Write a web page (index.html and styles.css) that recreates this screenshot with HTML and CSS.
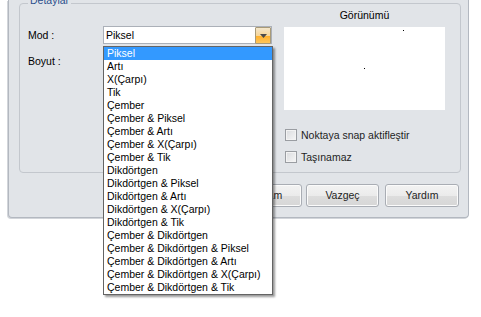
FILE: index.html
```html
<!DOCTYPE html>
<html lang="tr">
<head>
	<meta charset="UTF-8">
	<title>Detaylar</title>
	<link rel="stylesheet" href="styles.css">
</head>
<body>
	<div class="dialog">
		<div class="group">
			<span class="legend">Detaylar</span>
			<div class="form">
				<div class="row">
					<span class="label">Mod :</span>
					<div class="combo">
						<span class="value">Piksel</span>
						<span class="arrow">
							<svg width="7" height="5" viewBox="0 0 7 5"><path d="M0 1h7L3.5 5z" fill="#4b4b4b"/></svg>
						</span>
						<ul class="droplist">
							<li class="sel">Piksel</li>
							<li>Artı</li>
							<li>X(Çarpı)</li>
							<li>Tik</li>
							<li>Çember</li>
							<li>Çember &amp; Piksel</li>
							<li>Çember &amp; Artı</li>
							<li>Çember &amp; X(Çarpı)</li>
							<li>Çember &amp; Tik</li>
							<li>Dikdörtgen</li>
							<li>Dikdörtgen &amp; Piksel</li>
							<li>Dikdörtgen &amp; Artı</li>
							<li>Dikdörtgen &amp; X(Çarpı)</li>
							<li>Dikdörtgen &amp; Tik</li>
							<li>Çember &amp; Dikdörtgen</li>
							<li>Çember &amp; Dikdörtgen &amp; Piksel</li>
							<li>Çember &amp; Dikdörtgen &amp; Artı</li>
							<li>Çember &amp; Dikdörtgen &amp; X(Çarpı)</li>
							<li>Çember &amp; Dikdörtgen &amp; Tik</li>
						</ul>
					</div>
				</div>
				<div class="row">
					<span class="label">Boyut :</span>
				</div>
			</div>
			<div class="side">
				<div class="preview-title">Görünümü</div>
				<div class="preview">
					<i class="dot d1"></i>
					<i class="dot d2"></i>
				</div>
				<label class="check first"><span class="box"></span>Noktaya snap aktifleştir</label>
				<label class="check"><span class="box"></span>Taşınamaz</label>
			</div>
		</div>
		<div class="buttons">
			<button class="btn ok">Tamam</button>
			<button class="btn cancel">Vazgeç</button>
			<button class="btn">Yardım</button>
		</div>
	</div>
</body>
</html>
```

FILE: styles.css
```css
*{
	margin: 0;
	padding: 0;
	box-sizing: border-box;
}
html,body{
	height: 100%;
}
body{
	min-height: 317px;
	background: #fff;
	font-family: "Liberation Sans", Arial, sans-serif;
	font-size: 10.5px;
	line-height: 13px;
	color: #000;
}
.dialog{
	margin-left: 8px;
	width: 461px;
	height: 218px;
	background: #e1e4e8;
	border: 1px solid #b3b8c0;
	border-top: none;
	border-radius: 0 0 4px 4px;
	box-shadow: -1px 1px 0 #d2d5da;
	display: flex;
	flex-direction: column;
}
.group{
	position: relative;
	margin: 3px 0 0 10px;
	width: 442px;
	height: 170px;
	border: 1px solid #c3c7cd;
	border-radius: 4px;
	padding: 5px 15px 0 8px;
	display: grid;
	grid-template-columns: 256px 161px;
	align-items: start;
}
.legend{
	position: absolute;
	left: 8px;
	top: -10px;
	padding: 0 2px;
	background: #e1e4e8;
	color: #2b4f8c;
}
.form{
	margin-top: 17px;
	display: flex;
	flex-direction: column;
	gap: 8px;
}
.row{
	display: flex;
	align-items: center;
	height: 18px;
}
.label{
	width: 75px;
}
.combo{
	position: relative;
	width: 169px;
	height: 18px;
	background: #fff;
	border: 1px solid #abb0b8;
	display: flex;
	align-items: center;
	justify-content: space-between;
	padding-left: 2px;
}
.arrow{
	width: 16px;
	height: 17px;
	margin-top: 1px;
	border: 1px solid #a89a78;
	border-radius: 1px;
	background: linear-gradient(#f3e6cc, #f6d69a 50%, #ffb12e 55%, #ffc65a);
	display: flex;
	align-items: center;
	justify-content: center;
}
.arrow svg{
	display: block;
}
.droplist{
	position: absolute;
	left: -1px;
	top: 19px;
	width: 170px;
	list-style: none;
	background: #fff;
	border: 1px solid #646464;
	box-shadow: 2px 2px 2px rgba(0,0,0,.4);
	z-index: 10;
}
.droplist li{
	height: 13px;
	line-height: 13px;
	padding-left: 3px;
	white-space: nowrap;
}
.droplist .sel{
	background: #3399ff;
	color: #fff;
}
.side{
	display: flex;
	flex-direction: column;
}
.preview-title{
	text-align: center;
	margin-bottom: 5px;
}
.preview{
	position: relative;
	height: 83px;
	background: #fff;
}
.dot{
	position: absolute;
	width: 1px;
	height: 1px;
	background: #000;
}
.d1{
	left: 119px;
	top: 3px;
}
.d2{
	left: 80px;
	top: 41px;
}
.check{
	display: flex;
	align-items: center;
	height: 22px;
	padding-left: 1px;
	color: #1e1e1e;
}
.check.first{
	margin-top: 14px;
}
.box{
	width: 12px;
	height: 12px;
	margin-right: 4px;
	border: 1px solid #9a9da2;
	background: linear-gradient(135deg, #d9dbde, #f6f6f6);
	box-shadow: inset 0 0 0 1px #f3f3f3;
}
.buttons{
	margin-top: 11px;
	display: flex;
	justify-content: flex-end;
	padding-right: 9px;
}
.btn{
	width: 74px;
	height: 23px;
	font: inherit;
	color: #1e1e1e;
	border: 1px solid #a9adb4;
	border-radius: 3px;
	background: linear-gradient(#f3f3f3, #ebebeb 50%, #dddddd 51%, #d6d6d6);
	box-shadow: inset 0 0 0 1px #fbfbfb;
}
.btn.ok{
	margin-right: 4px;
}
.btn.cancel{
	width: 73px;
	margin-right: 6px;
}
```
